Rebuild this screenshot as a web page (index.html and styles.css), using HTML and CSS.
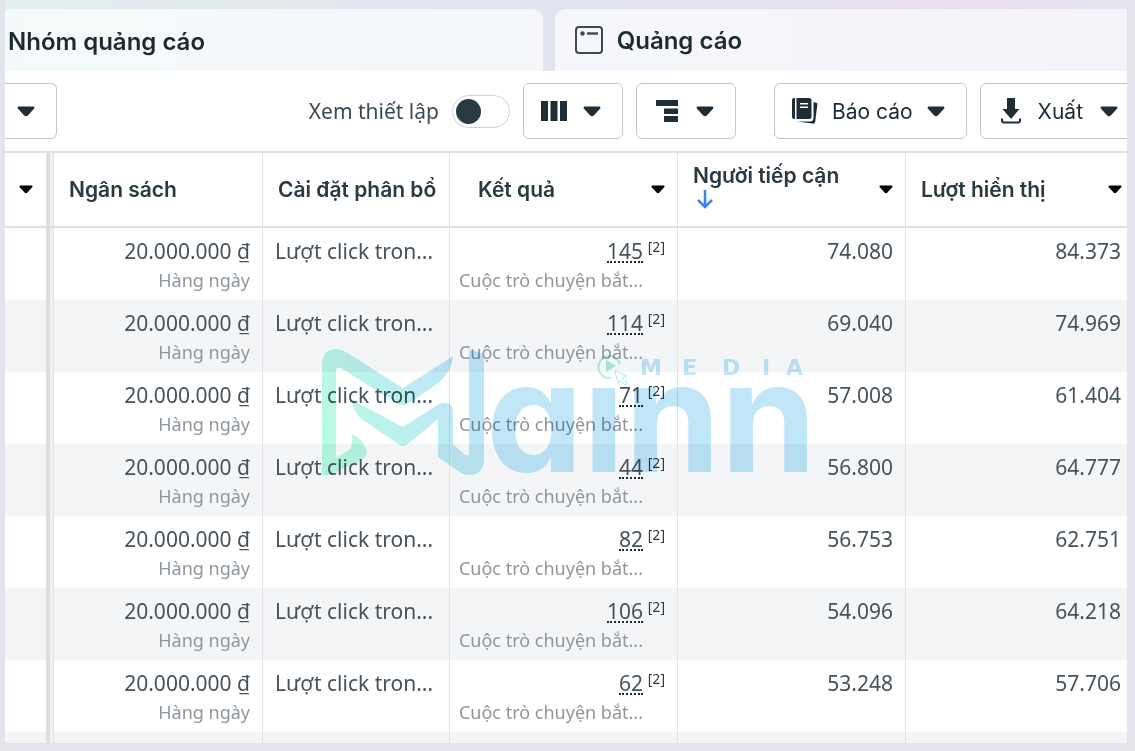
FILE: index.html
```html
<!DOCTYPE html>
<html lang="vi">
<head>
<meta charset="utf-8">
<title>Quảng cáo</title>
<link rel="stylesheet" href="styles.css">
</head>
<body>
<svg class="defs" aria-hidden="true">
  <symbol id="caret" viewBox="0 0 18 11"><path d="M2 0.5h14q2.2 0.3 1 2.2l-6.2 6.8q-1.8 1.5-3.6 0L1 2.7Q-0.2 0.8 2 0.5z"/></symbol>
</svg>
<main class="panel">
  <nav class="tabs">
    <button class="tab" type="button">Nhóm quảng cáo</button>
    <button class="tab tab-ads" type="button">
      <svg class="tab-icon" viewBox="0 0 28 28" aria-hidden="true"><rect x="1" y="1" width="26" height="26" rx="3" fill="none" stroke="#3d4a52" stroke-width="2"/><circle cx="7.5" cy="7.5" r="2.2" fill="#3d4a52"/><path d="M12 7.5h11" stroke="#3d4a52" stroke-width="2.4"/></svg>
      Quảng cáo
    </button>
  </nav>
  <div class="toolbar">
    <button class="btn btn-first" type="button" aria-label="Tùy chọn"><svg class="caret"><use href="#caret"/></svg></button>
    <label class="switch-label">Xem thiết lập <input class="switch" type="checkbox"></label>
    <button class="btn" type="button" aria-label="Cột"><svg class="icon" viewBox="0 0 26 26" aria-hidden="true"><path d="M0 3h7v20H0zM9.500 3h7v20h-7zM19 3h7v20h-7z"/></svg><svg class="caret"><use href="#caret"/></svg></button>
    <button class="btn" type="button" aria-label="Phân tích"><svg class="icon" viewBox="0 0 26 26" aria-hidden="true"><path d="M2 2h22v6H2zM10 10.500h14v5.500H10zM10 18h14v6H10z"/></svg><svg class="caret"><use href="#caret"/></svg></button>
    <button class="btn btn-report" type="button"><svg class="icon" viewBox="0 0 26 26" aria-hidden="true"><path d="M2 0h1v21H2Q0 21 0 19V2Q0 0 2 0zM4.500 0H17q2.500 0 2.500 2.500v16Q19.500 21 17 21H4.500zM8 5v1.500h8V5zM8 8.500V10h8V8.500z" fill-rule="evenodd"/><path d="M21.500 4l4 1.200-2.300 18.500Q23 26 20.500 25.600L5 23.500h13q3.500 0 3.500-4z"/></svg>Báo cáo<svg class="caret"><use href="#caret"/></svg></button>
    <button class="btn btn-export" type="button"><svg class="icon icon-export" viewBox="0 0 20 26" aria-hidden="true"><path d="M6 0h8v11h4.500L10 21 1.500 11H6z"/><path d="M1 20.500v2q0 2 2 2h14q2 0 2-2v-2" fill="none" stroke="#1f2d36" stroke-width="2"/></svg>Xuất<svg class="caret"><use href="#caret"/></svg></button>
  </div>
  <div class="table-area">
    <table class="grid">
      <colgroup><col class="c-pin"><col class="c-budget"><col class="c-alloc"><col class="c-metric"><col class="c-metric"><col></colgroup>
      <thead>
        <tr>
          <th scope="col"><button class="menu" type="button" aria-label="Sắp xếp"><svg class="caret-sm"><use href="#caret"/></svg></button></th>
          <th scope="col">Ngân sách</th>
          <th scope="col">Cài đặt phân bổ</th>
          <th scope="col"><div class="head head-result">Kết quả<button class="menu" type="button" aria-label="Sắp xếp kết quả"><svg class="caret-sm"><use href="#caret"/></svg></button></div></th>
          <th scope="col"><div class="head"><span class="sorted">Người tiếp cận<svg class="sort" viewBox="0 0 18 20" aria-hidden="true"><path d="M9 1v17M2 11l7 7 7-7" fill="none" stroke="#3b82f0" stroke-width="2.500"/></svg></span><button class="menu" type="button" aria-label="Sắp xếp người tiếp cận"><svg class="caret-sm"><use href="#caret"/></svg></button></div></th>
          <th scope="col"><div class="head head-last">Lượt hiển thị<button class="menu" type="button" aria-label="Sắp xếp lượt hiển thị"><svg class="caret-sm"><use href="#caret"/></svg></button></div></th>
        </tr>
      </thead>
      <tbody>
        <tr><td></td><td class="num">20.000.000 ₫<small>Hàng ngày</small></td><td>Lượt click tron...</td><td><div class="result"><a href="#">145</a><sup>[2]</sup><small>Cuộc trò chuyện bắt...</small></div></td><td class="num">74.080</td><td class="num">84.373</td></tr>
        <tr><td></td><td class="num">20.000.000 ₫<small>Hàng ngày</small></td><td>Lượt click tron...</td><td><div class="result"><a href="#">114</a><sup>[2]</sup><small>Cuộc trò chuyện bắt...</small></div></td><td class="num">69.040</td><td class="num">74.969</td></tr>
        <tr><td></td><td class="num">20.000.000 ₫<small>Hàng ngày</small></td><td>Lượt click tron...</td><td><div class="result"><a href="#">71</a><sup>[2]</sup><small>Cuộc trò chuyện bắt...</small></div></td><td class="num">57.008</td><td class="num">61.404</td></tr>
        <tr><td></td><td class="num">20.000.000 ₫<small>Hàng ngày</small></td><td>Lượt click tron...</td><td><div class="result"><a href="#">44</a><sup>[2]</sup><small>Cuộc trò chuyện bắt...</small></div></td><td class="num">56.800</td><td class="num">64.777</td></tr>
        <tr><td></td><td class="num">20.000.000 ₫<small>Hàng ngày</small></td><td>Lượt click tron...</td><td><div class="result"><a href="#">82</a><sup>[2]</sup><small>Cuộc trò chuyện bắt...</small></div></td><td class="num">56.753</td><td class="num">62.751</td></tr>
        <tr><td></td><td class="num">20.000.000 ₫<small>Hàng ngày</small></td><td>Lượt click tron...</td><td><div class="result"><a href="#">106</a><sup>[2]</sup><small>Cuộc trò chuyện bắt...</small></div></td><td class="num">54.096</td><td class="num">64.218</td></tr>
        <tr><td></td><td class="num">20.000.000 ₫<small>Hàng ngày</small></td><td>Lượt click tron...</td><td><div class="result"><a href="#">62</a><sup>[2]</sup><small>Cuộc trò chuyện bắt...</small></div></td><td class="num">53.248</td><td class="num">57.706</td></tr>
        <tr><td></td><td></td><td></td><td></td><td></td><td></td></tr>
      </tbody>
    </table>
  </div>
  <svg class="watermark" viewBox="322 348 490 132" aria-label="Mainn Media">
    <defs><linearGradient id="mint" gradientUnits="userSpaceOnUse" x1="330" y1="440" x2="450" y2="380"><stop offset="0" stop-color="#b8fbe2"/><stop offset="1" stop-color="#bfe6f8"/></linearGradient></defs>
    <path fill="url(#mint)" d="M323 475V364Q324 349 337 349Q342 349 347 352L404 388L448 360Q453 356 454 357Q453 372 438 384L409 404Q404 407 399 404L342 368Q337 366 337 371V458L350 450Q354 446 353 434Q366 440 368 453Q367 458 362 460L333 474Q328 476 323 475Z"/>
    <path fill="url(#mint)" d="M353 400L404 427L440 404Q454 399 454 413V444L465 454Q470 458 470 453V350Q485 351 485 360V460Q484 475 470 475Q464 475 459 471L439 457V419L409 444Q404 448 399 444L364 420Q354 412 353 400Z"/>
    <text class="wm-name" x="487" y="472">aınn</text>
    <text class="wm-media" x="641 683 723 763 787" y="375">MEDIA</text>
    <path d="M621 364A11 11 0 1 0 612 378" fill="none" stroke="#b4efdc" stroke-width="2"/>
    <path d="M607 360l10 6-10 6z" fill="#a8efd8"/>
    <path d="M616 371l12 5-5 2 5 5-2 2-5-5-2 4z" fill="#fff" stroke="#b4ebdf"/>
  </svg>
</main>
</body>
</html>
```
FILE: styles.css
```css
* { box-sizing: border-box; }
body {
  margin: 0;
  padding: 0 8px 8px 5px;
  height: 100vh;
  background: #e4e5ec;
  color: #1c2b33;
  font-family: "Noto Sans", "Open Sans", sans-serif;
  font-size: 21px;
}
button { font: inherit; color: inherit; cursor: pointer; }
.defs { position: absolute; width: 0; height: 0; }
.panel {
  position: relative;
  height: 100%;
  overflow: hidden;
  display: flex;
  flex-direction: column;
  background: #fff;
}
.tabs {
  display: grid;
  grid-template-columns: 31fr 33fr;
  gap: 12px;
  padding-top: 9px;
  background: linear-gradient(90deg, #e2eef0, #e1e4ee 50%, #e8deef 85%, #e6e3ee);
}
.tab {
  display: flex;
  align-items: center;
  gap: 14px;
  height: 62px;
  padding: 2px 3px 0;
  border: 0;
  border-radius: 0 10px 0 0;
  background: linear-gradient(90deg, #f4fafa, #f5f7fb);
  font-family: Inter, sans-serif;
  font-size: 24px;
  font-weight: 600;
}
.tab-ads {
  padding: 0 20px;
  border-radius: 10px 0 0 0;
  background: linear-gradient(90deg, #f5f7fb, #f6f2fa);
}
.tab-icon { width: 28px; height: 28px; }
.toolbar {
  display: flex;
  align-items: center;
  gap: 13px;
  padding: 12px 0;
  border-bottom: 2px solid #e0e1e3;
}
.btn {
  flex: none;
  display: flex;
  align-items: center;
  gap: 16px;
  height: 56px;
  padding: 0 21px 0 17px;
  border: 1px solid #c3c8cc;
  border-radius: 6px;
  background: #fff;
  font-family: Inter, sans-serif;
  font-size: 21px;
}
.btn-first { margin-right: auto; padding: 0 21px 0 12px; border-left: 0; border-radius: 0 6px 6px 0; }
.btn-report { gap: 14px; margin-left: 25px; }
.btn-export { gap: 17px; margin-right: -16px; padding: 0 24px 0 20px; }
.caret { width: 18px; height: 11px; fill: #1f2d36; }
.icon { width: 26px; height: 26px; fill: #1f2d36; }
.icon-export { width: 20px; }
.switch-label { display: flex; align-items: center; gap: 13px; color: #3b4a53; }
.switch {
  appearance: none;
  width: 58px;
  height: 33px;
  margin: 0;
  padding: 3px;
  border: 1px solid #cdd2d5;
  border-radius: 17px;
  background: #fff;
}
.switch::before { content: ""; display: block; width: 25px; height: 25px; border-radius: 50%; background: #2a3a44; }
.switch:checked::before { margin-left: auto; }
.table-area { flex: 1; min-height: 0; overflow: hidden; }
.grid { width: 100%; table-layout: fixed; border-collapse: separate; border-spacing: 0; }
.c-pin { width: 49px; }
.c-budget { width: 209px; }
.c-alloc { width: 187px; }
.c-metric { width: 228px; }
th, td { border-right: 1px solid #e2e3e6; }
th:last-child, td:last-child { border-right: 0; }
th:first-child, td:first-child {
  padding: 0 8px 0 0;
  border-right: 0;
  background: linear-gradient(to left, #e2e2e4 1px, #f1f1f2 1px 4px, #dedee0 4px 8px, transparent 8px);
}
th {
  height: 75px;
  padding: 0 0 0 15px;
  border-bottom: 2px solid #e0e1e3;
  text-align: left;
  white-space: nowrap;
  font-family: Inter, sans-serif;
  font-size: 21px;
  font-weight: 600;
  line-height: 26px;
  color: #2b3940;
}
.menu { display: flex; padding: 0; border: 0; background: none; }
th:first-child .menu { margin: auto; }
.caret-sm { width: 14px; height: 9px; fill: #000; }
.head { display: flex; align-items: center; justify-content: space-between; padding-right: 12px; }
.head-result { padding-left: 13px; }
.head-last { padding-right: 5px; }
.sorted { padding-bottom: 8px; }
.sort { display: block; width: 18px; height: 20px; margin-left: 3px; }
td {
  height: 72px;
  padding: 9px 12px 0;
  vertical-align: top;
  line-height: 29px;
  white-space: nowrap;
  color: #46535b;
}
td:last-child { padding-right: 6px; }
tbody tr:nth-child(even) { background: #f4f5f7; }
.num { text-align: right; }
small { display: block; font-size: 18px; color: #8f979d; }
.result { display: grid; grid-template-columns: minmax(0, 1fr) 16px; column-gap: 6px; justify-items: end; }
.result a {
  height: 26px;
  margin-bottom: 3px;
  border-bottom: 2px dotted #1c2b33;
  color: inherit;
  text-decoration: none;
}
.result sup { font-size: 14px; line-height: 20px; color: #2b3940; }
.watermark {
  position: absolute;
  top: 348px;
  left: 50%;
  width: 490px;
  height: 132px;
  overflow: visible;
  transform: translateX(-50%);
  mix-blend-mode: multiply;
  pointer-events: none;
}
.wm-name { font-family: Inter, sans-serif; font-size: 154px; font-weight: 700; font-feature-settings: "cv11"; fill: #c0e6f8; }
.wm-media { font-family: "DejaVu Sans", sans-serif; font-size: 22px; font-weight: 700; fill: #c0e6f8; }
```
